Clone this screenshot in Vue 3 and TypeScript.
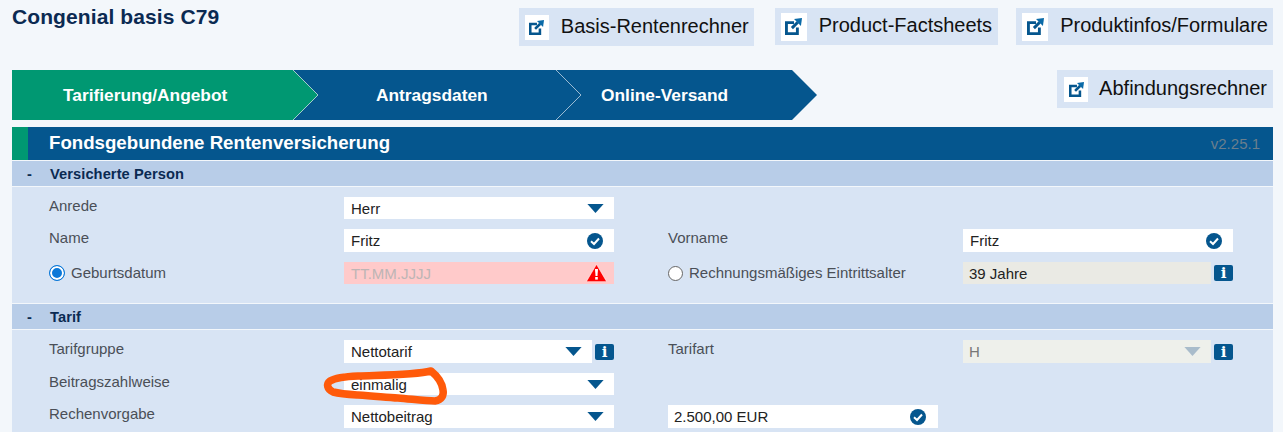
<script setup lang="ts">
const buttons = ['Basis-Rentenrechner', 'Product-Factsheets', 'Produktinfos/Formulare']
</script>

<template>
  <div class="page">
    <div class="top">
      <h1 class="title">Congenial basis C79</h1>
      <div class="links">
        <a v-for="(b, i) in buttons" :key="b" class="link" :class="'link' + i">
          <span class="ico"><svg class="ext" viewBox="0 0 16 16"><path d="M0 3h8.500v2.600H2.700v7.700h7.600V9H13v7H0z" fill="#05568e"/><path d="M6.500 9.500 12 4" stroke="#05568e" stroke-width="2.800" fill="none"/><path d="M8.500 1 16 0l-1 7.500z" fill="#0a6aa8"/></svg></span>
          <span class="txt">{{ b }}</span>
        </a>
      </div>
    </div>
    <div class="navrow">
      <div class="steps">
        <div class="step s1">Tarifierung/Angebot</div>
        <svg class="tip" width="25" height="50" viewBox="0 0 25 50"><path d="M0 0 25 25 0 50z" fill="#009872"/><path d="M0 0 25 25 0 50" fill="none" stroke="#cfe3e0" stroke-width=".8"/></svg>
        <div class="step s2">Antragsdaten</div>
        <svg class="tip" width="25" height="50" viewBox="0 0 25 50"><path d="M0 0 25 25 0 50z" fill="#05568e"/><path d="M0 0 25 25 0 50" fill="none" stroke="#c4d6e4" stroke-width=".8"/></svg>
        <div class="step s3">Online-Versand</div>
        <svg class="tip last" width="25" height="50" viewBox="0 0 25 50"><path d="M0 0 25 25 0 50z" fill="#05568e"/></svg>
      </div>
      <a class="link abf">
        <span class="ico"><svg class="ext" viewBox="0 0 16 16"><path d="M0 3h8.500v2.600H2.700v7.700h7.600V9H13v7H0z" fill="#05568e"/><path d="M6.500 9.500 12 4" stroke="#05568e" stroke-width="2.800" fill="none"/><path d="M8.500 1 16 0l-1 7.500z" fill="#0a6aa8"/></svg></span>
        <span class="txt">Abfindungsrechner</span>
      </a>
    </div>
    <div class="head"><span class="mark"></span><span class="head-t">Fondsgebundene Rentenversicherung</span><span class="ver">v2.25.1</span></div>
    <div class="sec"><span class="minus">-</span>Versicherte Person</div>
    <div class="body b1">
      <div class="grid">
        <label class="lb">Anrede</label>
        <div class="inp"><span>Herr</span><svg class="tri" width="17" height="9" viewBox="0 0 18 10"><path d="M0 0h18L9 10z"/></svg></div>
        <span></span><span></span><span></span>
        <label class="lb">Name</label>
        <div class="inp"><span>Fritz</span><svg class="chk" width="16" height="16" viewBox="0 0 16 16"><circle cx="8" cy="8" r="8"/><path d="M4 8.300 7 11l5-5.500" fill="none" stroke="#fff" stroke-width="2"/></svg></div>
        <span></span>
        <label class="lb">Vorname</label>
        <div class="inp"><span>Fritz</span><svg class="chk" width="16" height="16" viewBox="0 0 16 16"><circle cx="8" cy="8" r="8"/><path d="M4 8.300 7 11l5-5.500" fill="none" stroke="#fff" stroke-width="2"/></svg></div>
        <label class="lb rad"><span class="radio on"></span>Geburtsdatum</label>
        <div class="inp err"><span>TT.MM.JJJJ</span><svg width="21" height="18" viewBox="0 0 21 18"><path d="M10.500 0.300 20.700 17.700H0.300z" fill="#ff0000" stroke="#fff" stroke-width=".6"/><path d="M9 5h3l-.5 7h-2z" fill="#fff"/><rect x="9.200" y="13" width="2.600" height="2.600" fill="#fff"/></svg></div>
        <span></span>
        <label class="lb rad"><span class="radio"></span>Rechnungsmäßiges Eintrittsalter</label>
        <div class="withinfo"><div class="inp ro"><span>39 Jahre</span></div><span class="info">i</span></div>
      </div>
    </div>
    <div class="sec"><span class="minus">-</span>Tarif</div>
    <div class="body b2">
      <div class="grid grid2">
        <label class="lb">Tarifgruppe</label>
        <div class="withinfo"><div class="inp"><span>Nettotarif</span><svg class="tri" width="17" height="9" viewBox="0 0 18 10"><path d="M0 0h18L9 10z"/></svg></div><span class="info">i</span></div>
        <span></span>
        <label class="lb">Tarifart</label>
        <div class="withinfo"><div class="inp dis"><span>H</span><svg class="tri" width="17" height="9" viewBox="0 0 18 10"><path d="M0 0h18L9 10z"/></svg></div><span class="info">i</span></div>
        <label class="lb">Beitragszahlweise</label>
        <div class="inp"><span>einmalig</span><svg class="tri" width="17" height="9" viewBox="0 0 18 10"><path d="M0 0h18L9 10z"/></svg></div>
        <span></span><span></span><span></span>
        <label class="lb">Rechenvorgabe</label>
        <div class="inp"><span>Nettobeitrag</span><svg class="tri" width="17" height="9" viewBox="0 0 18 10"><path d="M0 0h18L9 10z"/></svg></div>
        <span></span>
        <div class="inp short"><span>2.500,00 EUR</span><svg class="chk" width="16" height="16" viewBox="0 0 16 16"><circle cx="8" cy="8" r="8"/><path d="M4 8.300 7 11l5-5.500" fill="none" stroke="#fff" stroke-width="2"/></svg></div>
        <span></span>
      </div>
    </div>
    <svg class="scribble" width="140" height="46" viewBox="0 0 140 46"><path d="M116 9C100 13 70 13 43 14 30 14.500 20 16 15 19 11 22 12 27 18 30 26 32 35 32.500 43 33 60 34 72 35.500 83 36 96 37 110 39 120 39 127 38 129 33 128 28 127 20 121 13 116 9Z" fill="none" stroke="#ff5a0a" stroke-width="7.500" stroke-linecap="round" stroke-linejoin="round"/></svg>
  </div>
</template>

<style>
html, body { margin: 0; background: #f3f7fb; }
</style>

<style scoped>
.page { position: relative; width: 1283px; height: 432px; overflow: hidden; background: #f3f7fb; font-family: "Liberation Sans", Arial, sans-serif; color: #222; }
.top { display: flex; justify-content: space-between; height: 70px; padding: 0 10px 0 12px; box-sizing: border-box; }
.title { margin: 5px 0 0; font-size: 21px; line-height: 24px; font-weight: 700; color: #0b2a52; letter-spacing: .1px; }
.links { display: flex; gap: 18px; padding-top: 8px; align-items: flex-start; }
.link { display: flex; align-items: center; gap: 12px; height: 37px; padding: 0 6px; background: #d8e4f4; font-size: 20px; color: #111; box-sizing: border-box; }
.txt { padding-bottom: 2px; }
.ico { display: flex; align-items: center; justify-content: center; width: 26px; height: 28px; background: #fff; }
.ext { width: 17px; height: 17px; display: block; }
.link0 { height: 38px; margin-right: 3px; padding-right: 5px; }
.link2 { padding-right: 5px; }
.link0 .ico, .abf .ico { width: 24px; height: 25px; }
.link0 .ext, .abf .ext { width: 15px; height: 15px; }
.navrow { display: flex; justify-content: space-between; height: 57px; padding: 0 10px 0 12px; box-sizing: border-box; }
.steps { display: flex; height: 50px; }
.step { display: flex; align-items: center; height: 50px; color: #fff; font-weight: 700; font-size: 17.330px; box-sizing: border-box; background: #05568e; }
.s1 { width: 281px; padding-left: 51px; background: #009872; }
.s2 { width: 263px; padding-left: 83px; }
.s3 { width: 236px; padding-left: 45px; }
.tip { flex: none; margin-right: -25px; position: relative; z-index: 1; overflow: visible; }
.tip.last { margin-right: 0; }
.abf { height: 38px; gap: 11px; padding: 0 6px 0 7px; }
.head { display: flex; align-items: center; height: 33px; margin: 0 10px 0 12px; background: #05568e; color: #fff; }
.mark { width: 16px; height: 100%; background: #009872; }
.head-t { margin-left: 21px; padding-bottom: 2px; font-size: 18.670px; font-weight: 700; flex: 1; }
.ver { font-size: 15px; color: #6b7f8d; margin-right: 13px; }
.sec { display: flex; align-items: center; height: 25px; margin: 1px 10px 1px 12px; background: #b8cde8; color: #0b2a52; font-size: 14.670px; font-weight: 700; letter-spacing: .07px; }
.minus { width: 38px; padding-left: 15px; box-sizing: border-box; }
.body { margin: 0 10px 0 12px; padding: 10px 0 19px 37px; background: #d8e4f4; }
.b2 { height: 102px; box-sizing: border-box; }
.grid { display: grid; grid-template-columns: 295px 270px 54px 295px 270px; grid-template-rows: 22px 23px 22px; row-gap: 10px; }
.grid2 { grid-template-rows: 23px 22px 23px; }
.lb { font-size: 15px; color: #4a4f57; line-height: 18px; }
.rad { display: flex; align-items: center; height: 22px; line-height: 22px; }
.radio { width: 15px; height: 15px; box-sizing: border-box; border-radius: 50%; border: 1.500px solid #666; background: #fff; margin-right: 6px; }
.radio.on { width: 16px; height: 16px; border: 1.500px solid #0b78d8; box-shadow: inset 0 0 0 2px #fff; background: #0b78d8; }
.inp { flex: 1; display: flex; align-items: center; justify-content: space-between; background: #fff; padding: 0 10px 0 7px; font-size: 15px; color: #222; min-width: 0; }
.short { width: 270px; box-sizing: border-box; padding-left: 6px; padding-right: 11px; }
.tri { fill: #05568e; }
.chk { fill: #05568e; margin-right: 1px; }
.err { background: #ffcaca; color: #bdb5b5; padding-right: 7px; }
.ro { background: #eaeae4; padding-left: 6px; }
.dis { background: #eef0eb; color: #777; padding-left: 6px; }
.dis .tri { fill: #a9bccb; }
.withinfo { display: flex; gap: 3px; align-items: stretch; }
.info { align-self: center; flex: none; width: 19px; height: 16px; border-radius: 2px; background: #05568e; color: #fff; font: 700 15px/16px "DejaVu Serif", serif; text-align: center; }
.scribble { position: absolute; left: 315px; top: 362px; pointer-events: none; }
</style>
